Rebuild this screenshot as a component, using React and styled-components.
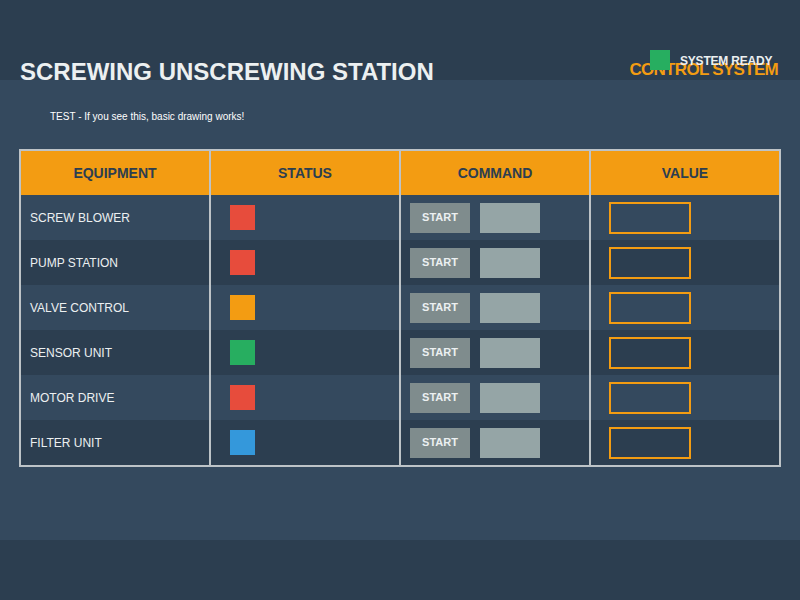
import styled, { createGlobalStyle } from 'styled-components';

const equipment = [
  { name: 'SCREW BLOWER', status: '#e74c3c' },
  { name: 'PUMP STATION', status: '#e74c3c' },
  { name: 'VALVE CONTROL', status: '#f39c12' },
  { name: 'SENSOR UNIT', status: '#27ae60' },
  { name: 'MOTOR DRIVE', status: '#e74c3c' },
  { name: 'FILTER UNIT', status: '#3498db' }
];

const columns = ['EQUIPMENT', 'STATUS', 'COMMAND', 'VALUE'];

export default function App() {
  return (
    <>
      <GlobalStyle />
      <Screen>
        <TopBar>
          <Title>SCREWING UNSCREWING STATION</Title>
          <Subtitle>CONTROL SYSTEM</Subtitle>
          <ReadyBadge>
            <ReadyLight />
            <ReadyText>SYSTEM READY</ReadyText>
          </ReadyBadge>
        </TopBar>
        <Panel>
          <TestNote>TEST - If you see this, basic drawing works!</TestNote>
          <Table>
            <Row>
              {columns.map(col => (
                <HeadCell key={col}>{col}</HeadCell>
              ))}
            </Row>
            {equipment.map((item, i) => (
              <Row key={item.name}>
                <Cell $dark={i % 2 === 1} $pad='9px'>
                  <Name>{item.name}</Name>
                </Cell>
                <Cell $dark={i % 2 === 1} $pad='19px'>
                  <StatusLight $color={item.status} />
                </Cell>
                <Cell $dark={i % 2 === 1} $pad='9px'>
                  <StartButton>START</StartButton>
                  <StopButton />
                </Cell>
                <Cell $dark={i % 2 === 1} $pad='18px'>
                  <ValueBox />
                </Cell>
              </Row>
            ))}
          </Table>
        </Panel>
      </Screen>
    </>
  );
}

const GlobalStyle = createGlobalStyle`
  * { box-sizing: border-box; }
  body {
    margin: 0;
    background: #2c3e50;
    font-family: 'Liberation Sans', Arial, sans-serif;
    color: #ecf0f1;
  }
`;

const Screen = styled.div`
  width: 800px;
  height: 600px;
  background: #2c3e50;
  overflow: hidden;
`;

const TopBar = styled.header`
  position: relative;
  z-index: 1;
  height: 80px;
  padding: 0 22px 0 20px;
  display: flex;
  justify-content: space-between;
  align-items: flex-end;
`;

const Title = styled.h1`
  margin: 0 0 -4px;
  font-size: 24px;
  font-weight: 700;
  line-height: 1;
  color: #ecf0f1;
`;

const Subtitle = styled.div`
  margin-bottom: 2px;
  font-size: 17px;
  font-weight: 700;
  line-height: 1;
  letter-spacing: -0.7px;
  color: #f39c12;
`;

const ReadyBadge = styled.div`
  position: absolute;
  top: 50px;
  left: 650px;
  display: flex;
  align-items: flex-start;
  gap: 10px;
`;

const ReadyLight = styled.span`
  width: 20px;
  height: 20px;
  background: #27ae60;
`;

const ReadyText = styled.span`
  margin-top: 5px;
  font-size: 12px;
  font-weight: 700;
  line-height: 1;
  letter-spacing: -0.2px;
  color: #ecf0f1;
`;

const Panel = styled.main`
  height: 460px;
  padding: 31px 19px 0;
  background: #34495e;
`;

const TestNote = styled.p`
  margin: 0 0 26px 31px;
  font-size: 10px;
  line-height: 12px;
  color: #ffffff;
`;

const Table = styled.div`
  width: 762px;
  border: 2px solid #bdc3c7;
  background: #bdc3c7;
`;

const Row = styled.div`
  display: grid;
  grid-template-columns: repeat(4, 1fr);
  column-gap: 2px;
`;

const HeadCell = styled.div`
  height: 44px;
  display: flex;
  align-items: center;
  justify-content: center;
  background: #f39c12;
  color: #2c3e50;
  font-size: 14px;
  font-weight: 700;
`;

const Cell = styled.div`
  height: 45px;
  display: flex;
  align-items: center;
  gap: 10px;
  padding-left: ${p => p.$pad};
  background: ${p => (p.$dark ? '#2c3e50' : '#34495e')};
`;

const Name = styled.span`
  margin-top: 1px;
  font-size: 12px;
  color: #ecf0f1;
`;

const StatusLight = styled.span`
  width: 25px;
  height: 25px;
  background: ${p => p.$color};
`;

const StartButton = styled.button`
  width: 60px;
  height: 30px;
  margin-top: 1px;
  padding: 0 0 2px;
  border: none;
  background: #7f8c8d;
  color: #ecf0f1;
  font-family: 'Liberation Sans', Arial, sans-serif;
  font-size: 11px;
  font-weight: 700;
`;

const StopButton = styled.span`
  width: 60px;
  height: 30px;
  margin-top: 1px;
  background: #95a5a6;
`;

const ValueBox = styled.span`
  width: 82px;
  height: 32px;
  border: 2px solid #f39c12;
`;
